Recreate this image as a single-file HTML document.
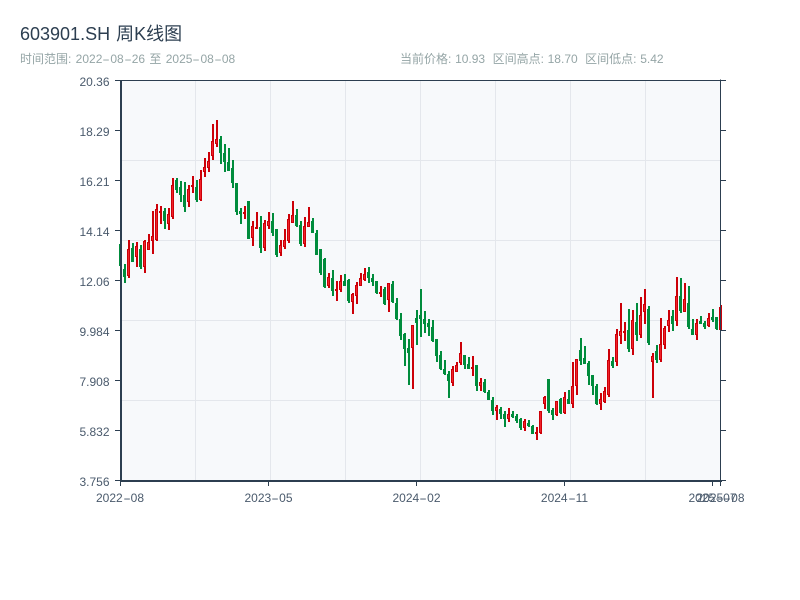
<!DOCTYPE html>
<html><head><meta charset="utf-8"><style>
html,body{margin:0;padding:0;background:#fff}
body{width:800px;height:600px;overflow:hidden;position:relative;font-family:"Liberation Sans","WenQuanYi Zen Hei",sans-serif}
svg{position:absolute;left:0;top:0}
.t,.s,.y,.x{position:absolute;white-space:pre;font-size:12px;line-height:14px}
.t{left:20px;top:23px;font-size:18px;line-height:22px;color:#2c3e50;word-spacing:1px}
.s{top:52px;color:#95a5a6}
.y{left:0;width:109.5px;text-align:right;color:#4a5a6c}
.x{top:491px;width:80px;text-align:center;color:#4a5a6c}
i{font-style:normal;display:inline-block;width:8px;text-align:center;transform:scaleX(1.9)}
</style></head><body>
<svg width="800" height="600" viewBox="0 0 800 600" xmlns="http://www.w3.org/2000/svg">
<rect x="120" y="80" width="600" height="400" fill="#f7f9fb"/>
<path d="M195.5 80V480M270.5 80V480M345.5 80V480M420.5 80V480M495.5 80V480M570.5 80V480M645.5 80V480M120 160.5H720M120 240.5H720M120 320.5H720M120 400.5H720" stroke="#e4e7ec" stroke-width="1" fill="none"/>
<path fill="none" stroke="#008c3c" stroke-width="2" d="M121 244V266M125 264V283M133 243V262M141 245V269M165 208V229M177 178V193M181 181V202M185 182V212M197 180V202M221 136V164M225 144V172M229 148V171M233 160V188M237 183V215M241 208V224M249 201V239M261 216V253M273 213V236M277 229V257M297 209V227M301 221V246M313 218V233M317 230V255M321 249V275M325 258V288M333 270V296M345 274V286M349 279V303M369 267V283M373 274V286M377 281V294M385 287V305M393 281V303M397 298V320M401 313V340M405 333V366M409 339V385M417 310V345M421 289V337M425 311V333M429 319V336M433 320V342M437 339V362M441 351V370M445 360V375M449 371V398M465 355V369M469 357V369M477 365V391M485 379V393M489 390V400M493 397V415M501 407V419M505 411V427M513 411V418M517 414V423M521 418V430M529 420V427M533 425V434M549 379V413M553 408V420M561 398V414M569 390V404M581 338V365M585 346V364M589 361V385M593 375V395M597 384V405M613 357V368M629 309V352M637 303V341M649 306V345M657 345V363M673 310V331M681 278V313M689 286V329M693 319V335M701 316V324M705 321V329M713 309V322M717 317V330"/>
<path fill="none" stroke="#008c3c" stroke-width="3" d="M120.5 244V266M124.5 269V277M132.5 248V262M140.5 249V267M164.5 211V221M176.5 180V190M180.5 187V195M184.5 195V207M196.5 187V200M220.5 139V153M224.5 153V162M228.5 162V171M232.5 168V183M236.5 183V212M240.5 211V214M248.5 201V239M260.5 227V248M272.5 221V233M276.5 229V255M296.5 215V226M300.5 225V244M312.5 221V233M316.5 233V255M320.5 249V273M324.5 259V287M332.5 278V291M344.5 281V286M348.5 280V301M368.5 272V278M372.5 278V282M376.5 281V293M384.5 289V304M392.5 284V302M396.5 303V319M400.5 319V336M404.5 334V349M408.5 348V353M416.5 318V323M420.5 315V319M424.5 319V324M428.5 323V327M432.5 327V341M436.5 339V356M440.5 355V369M444.5 369V374M448.5 374V381M464.5 355V365M468.5 364V369M476.5 365V386M484.5 382V392M488.5 392V400M492.5 400V411M500.5 409V414M504.5 414V419M512.5 414V417M516.5 416V421M520.5 419V428M528.5 423V426M532.5 426V434M548.5 379V411M552.5 410V415M560.5 399V413M568.5 399V404M580.5 350V361M584.5 358V364M588.5 363V376M592.5 375V386M596.5 386V404M612.5 361V366M628.5 330V349M636.5 322V335M648.5 309V343M656.5 351V360M672.5 316V324M680.5 296V311M688.5 303V327M692.5 329V335M700.5 321V324M704.5 323V327M712.5 317V320M716.5 317V329"/>
<path fill="none" stroke="#cc0008" stroke-width="2" d="M129 240V278M137 242V267M145 240V273M149 234V250M153 211V254M157 204V241M161 206V224M169 208V230M173 178V219M189 185V207M193 176V193M201 170V201M205 158V177M209 152V172M213 124V160M217 120V147M245 206V219M253 221V246M257 212V229M265 220V251M269 212V229M281 240V256M285 229V249M289 214V243M293 201V223M305 217V247M309 207V227M329 273V288M337 281V301M341 275V292M353 293V314M357 282V304M361 273V286M365 268V281M381 286V297M389 283V312M413 325V389M453 366V386M457 362V372M461 342V365M473 356V376M481 378V391M497 405V420M509 408V422M525 419V431M537 427V440M541 411V434M545 396V409M557 401V416M565 392V414M573 362V408M577 359V395M601 393V410M605 387V403M609 349V397M617 329V366M621 303V344M625 322V341M633 310V355M641 297V338M645 289V324M653 353V398M661 318V362M665 326V349M669 310V332M677 277V326M685 283V312M697 319V340M709 313V327M721 305V330"/>
<path fill="none" stroke="#cc0008" stroke-width="3" d="M128.5 249V276M136.5 246V257M144.5 241V267M148.5 242V250M152.5 236V241M156.5 209V240M160.5 211V213M168.5 214V224M172.5 185V217M188.5 189V202M192.5 185V187M200.5 179V200M204.5 167V172M208.5 161V168M212.5 141V156M216.5 139V144M244.5 212V214M252.5 226V238M256.5 227V229M264.5 223V248M268.5 221V226M280.5 245V253M284.5 240V247M288.5 219V241M292.5 215V223M304.5 226V244M308.5 222V227M328.5 277V286M336.5 289V291M340.5 281V290M352.5 294V302M356.5 285V296M360.5 278V286M364.5 274V280M380.5 292V294M388.5 283V300M412.5 325V348M452.5 369V383M456.5 365V372M460.5 353V363M472.5 367V369M480.5 382V386M496.5 407V411M508.5 414V419M524.5 421V428M536.5 432V434M540.5 411V433M544.5 397V404M556.5 401V415M564.5 397V413M572.5 386V404M576.5 359V386M600.5 399V404M604.5 391V402M608.5 360V395M616.5 334V362M620.5 331V336M624.5 331V333M632.5 320V349M640.5 315V335M644.5 304V312M652.5 356V362M660.5 344V360M664.5 328V345M668.5 320V326M676.5 296V321M684.5 299V312M696.5 323V335M708.5 318V326M720.5 307V330"/>
<path fill="none" stroke="#f0222a" stroke-width="1" d="M128.5 250V275M136.5 247V256M144.5 242V266M148.5 243V249M152.5 237V240M156.5 210V239M168.5 215V223M172.5 186V216M188.5 190V201M200.5 180V199M204.5 168V171M208.5 162V167M212.5 142V155M216.5 140V143M252.5 227V237M264.5 224V247M268.5 222V225M280.5 246V252M284.5 241V246M288.5 220V240M292.5 216V222M304.5 227V243M308.5 223V226M328.5 278V285M340.5 282V289M352.5 295V301M356.5 286V295M360.5 279V285M364.5 275V279M388.5 284V299M412.5 326V347M452.5 370V382M456.5 366V371M460.5 354V362M480.5 383V385M496.5 408V410M508.5 415V418M524.5 422V427M540.5 412V432M544.5 398V403M556.5 402V414M564.5 398V412M572.5 387V403M576.5 360V385M600.5 400V403M604.5 392V401M608.5 361V394M616.5 335V361M620.5 332V335M632.5 321V348M640.5 316V334M644.5 305V311M652.5 357V361M660.5 345V359M664.5 329V344M668.5 321V325M676.5 297V320M684.5 300V311M696.5 324V334M708.5 319V325"/>
<path d="M120 81H720M720.5 80V482" stroke="#2c3e50" stroke-width="1" fill="none" transform="translate(0,-.5)"/>
<path d="M121 80V482M120 481H722" stroke="#2c3e50" stroke-width="2" fill="none"/>
<path d="M115 80.5H120M115 130.5H120M115 180.5H120M115 230.5H120M115 280.5H120M115 330.5H120M115 380.5H120M115 430.5H120M115 480.5H120M721 80.5H726M721 130.5H726M721 180.5H726M721 230.5H726M721 280.5H726M721 330.5H726M721 380.5H726M721 430.5H726M721 480.5H726M120.5 482V486M268.5 482V486M416.5 482V486M564.5 482V486M712.5 482V486M720.5 482V486" stroke="#2c3e50" stroke-width="1" fill="none"/>
</svg>
<div class="t">603901.SH 周K线图</div>
<div class="s" style="left:20px;word-spacing:1px">时间范围: 2022<i>-</i>08<i>-</i>26 至 2025<i>-</i>08<i>-</i>08</div>
<div class="s" style="left:400px;word-spacing:.4px">当前价格: 10.93  区间高点: 18.70  区间低点: 5.42</div>
<div class="y" style="top:75px">20.36</div>
<div class="y" style="top:125px">18.29</div>
<div class="y" style="top:175px">16.21</div>
<div class="y" style="top:225px">14.14</div>
<div class="y" style="top:275px">12.06</div>
<div class="y" style="top:325px">9.984</div>
<div class="y" style="top:375px">7.908</div>
<div class="y" style="top:425px">5.832</div>
<div class="y" style="top:475px">3.756</div>
<div class="x" style="left:80px">2022<i>-</i>08</div>
<div class="x" style="left:228.5px">2023<i>-</i>05</div>
<div class="x" style="left:376.5px">2024<i>-</i>02</div>
<div class="x" style="left:524.5px">2024<i>-</i>11</div>
<div class="x" style="left:672.5px">2025<i>-</i>07</div>
<div class="x" style="left:680.5px">2025<i>-</i>08</div>
</body></html>
